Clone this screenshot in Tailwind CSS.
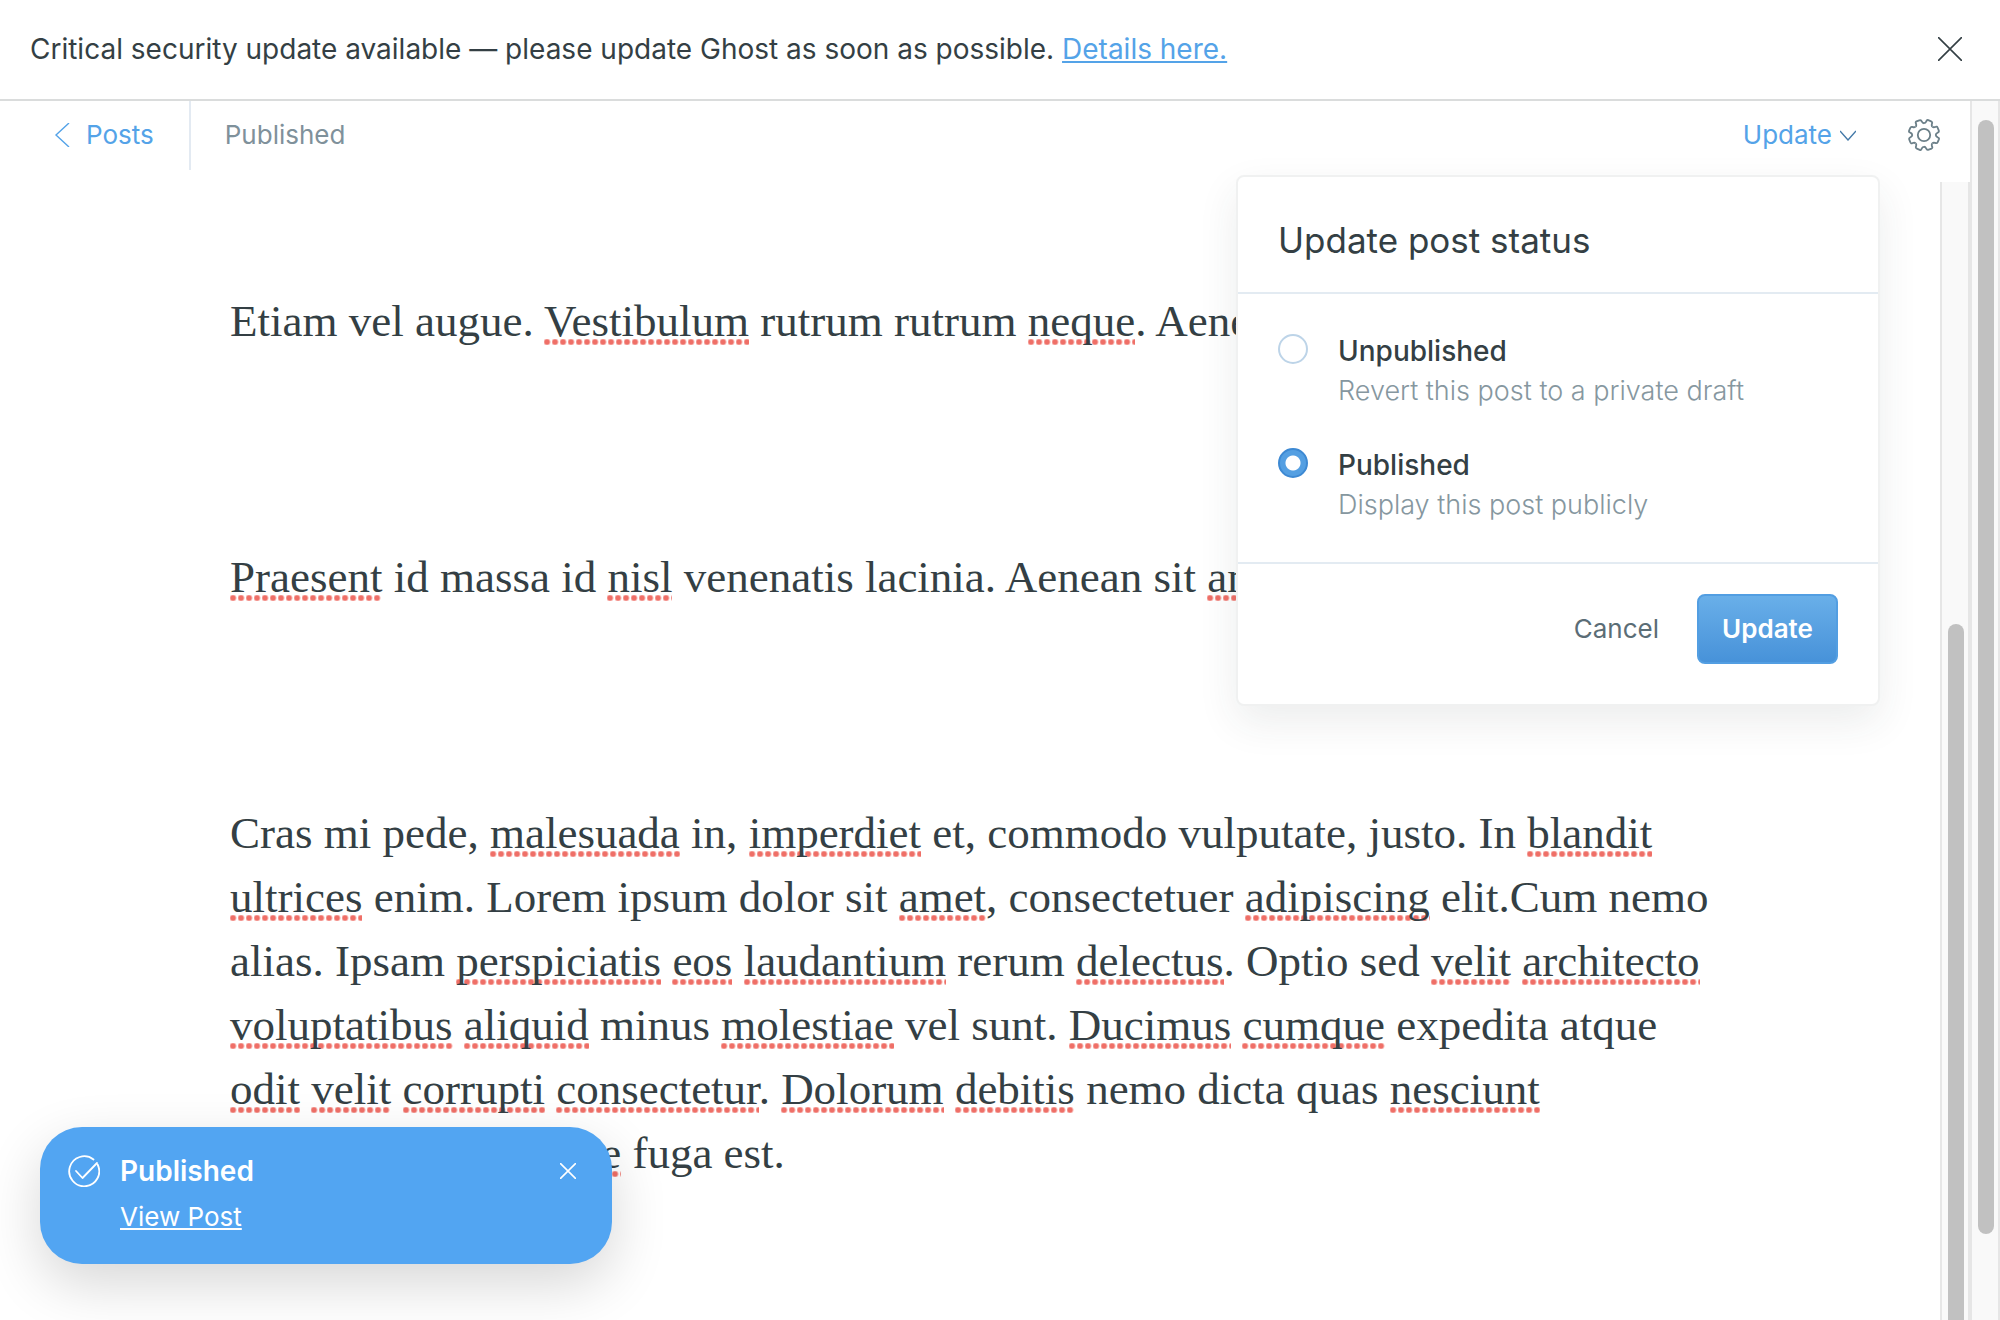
<!DOCTYPE html>
<html lang="en">
<head>
<meta charset="utf-8">
<meta name="viewport" content="width=device-width, initial-scale=1">
<title>Edit post</title>
<script src="https://cdn.jsdelivr.net/npm/@tailwindcss/browser@4"></script>
</head>
<body class="relative flex h-screen flex-col overflow-hidden bg-white font-['Inter',sans-serif] text-[28px] leading-10 text-[#343f44]">

  <!-- Alert banner -->
  <aside class="flex shrink-0 items-center justify-between border-b-2 border-[#dadcdc] pt-[29px] pr-[38px] pb-[30px] pl-[30px]">
    <p class="whitespace-nowrap">Critical security update available — please update Ghost as soon as possible. <a href="#" class="text-[#54a3e8] underline decoration-2 underline-offset-2">Details here.</a></p>
    <button type="button" aria-label="Dismiss" class="text-[#343f44]">
      <svg class="size-6" viewBox="0 0 24 24" fill="none" stroke="currentColor" stroke-width="1.6"><path d="M0 0 24 24M24 0 0 24"/></svg>
    </button>
  </aside>

  <div class="flex min-h-0 flex-1">
    <div class="relative flex min-w-0 flex-1 flex-col">

      <!-- Editor toolbar -->
      <header class="flex h-[81px] shrink-0 items-start justify-between pr-[30px] text-[26px]">
        <nav class="flex">
          <a href="#" class="flex h-[69px] items-center gap-4 border-r-2 border-[#e3eaf2] pr-[35px] pb-0.5 pl-[54px] text-[#54a3e8]">
            <svg class="h-6 w-4" viewBox="0 0 16 24" fill="none" stroke="currentColor" stroke-width="1.4"><path d="M15 0 2 12 15 24"/></svg>
            Posts
          </a>
          <span class="flex h-[69px] items-center pb-0.5 pl-[34px] text-[#7f919b]">Published</span>
        </nav>
        <div class="flex h-[69px] items-center gap-[52px] pb-0.5">
          <button type="button" class="flex items-center gap-2 text-[#54a3e8]">
            Update
            <svg class="h-3 w-4" viewBox="0 0 16 12" fill="none" stroke="#4379a8" stroke-width="1.4"><path d="M0 2 8 11 16 2"/></svg>
          </button>
          <button type="button" aria-label="Settings" class="text-[#6b7f88]">
            <svg class="size-8" viewBox="-16 -16 32 32" fill="none" stroke="currentColor" stroke-width="1.8">
              <circle r="6.200"/>
              <path id="tooth" d="M0-11.800C1.600-11.800 2-13 2.500-14Q3-15.400 4.300-14.900L7.100-13.700Q8.500-13.100 8.100-11.700C7.800-10.600 7.200-9.500 8.300-8.300"/>
              <use href="#tooth" transform="rotate(45)"/><use href="#tooth" transform="rotate(90)"/><use href="#tooth" transform="rotate(135)"/><use href="#tooth" transform="rotate(180)"/><use href="#tooth" transform="rotate(225)"/><use href="#tooth" transform="rotate(270)"/><use href="#tooth" transform="rotate(315)"/>
            </svg>
          </button>
        </div>
      </header>

      <!-- Post body and its scrollbar -->
      <div class="flex min-h-0 flex-1">
        <main class="min-w-0 flex-1 overflow-hidden">
          <article class="mx-auto flex max-w-[1480px] flex-col gap-48 pt-[107px] font-['Liberation_Serif',serif] text-[45px] leading-[64px] whitespace-nowrap [&_u]:bg-[radial-gradient(circle_at_3px_3px,#ef6f67_2px,transparent_4px)] [&_u]:bg-[length:8px_6px] [&_u]:bg-[position:0_43px] [&_u]:bg-repeat-x [&_u]:no-underline">
            <p>Etiam vel augue. <u>Vestibulum</u> rutrum rutrum <u>neque</u>. Aenean</p>
            <p><u>Praesent</u> id massa id <u>nisl</u> venenatis lacinia. Aenean sit <u>amet</u></p>
            <p>Cras mi pede, <u>malesuada</u> in, <u>imperdiet</u> et, commodo vulputate, justo. In <u>blandit</u><br>
              <u>ultrices</u> enim. Lorem ipsum dolor sit <u>amet</u>, consectetuer <u>adipiscing</u> elit.Cum nemo<br>
              alias. Ipsam <u>perspiciatis</u> <u>eos</u> <u>laudantium</u> rerum <u>delectus</u>. Optio sed <u>velit</u> <u>architecto</u><br>
              <u>voluptatibus</u> <u>aliquid</u> minus <u>molestiae</u> vel sunt. <u>Ducimus</u> <u>cumque</u> expedita atque<br>
              <u>odit</u> <u>velit</u> <u>corrupti</u> <u>consectetur</u>. <u>Dolorum</u> <u>debitis</u> nemo dicta quas <u>nesciunt</u><br>
              <u>voluptatem</u> <u>cupiditate</u> fuga est.</p>
          </article>
        </main>
        <div class="flex w-[30px] justify-end border-x-2 border-[#e6e6e6] bg-[#f9f9f9] pt-[442px] pr-1">
          <div class="w-4 rounded-t-full bg-[#c1c1c1]"></div>
        </div>
      </div>

      <!-- Publish menu -->
      <form class="absolute top-[74px] right-[90px] w-[644px] rounded-lg border-2 border-[#f0f1f1] bg-white shadow-[0_16px_40px_rgba(40,60,60,0.09)]">
        <h2 class="border-b-2 border-[#e3ebf2] px-10 pt-[42px] pb-[30px] text-[35px] leading-[43px]">Update post status</h2>
        <div class="flex flex-col gap-[34px] px-10 py-[37px]">
          <div class="flex items-start gap-[30px]">
            <input type="radio" id="unpublished" name="status" class="mt-[3px] size-[30px] shrink-0 appearance-none rounded-full border-2 border-[#bdd4e8] bg-white">
            <label for="unpublished" class="flex flex-col leading-10">
              <span class="font-medium">Unpublished</span>
              <span class="text-[27px] font-light text-[#86979f]">Revert this post to a private draft</span>
            </label>
          </div>
          <div class="flex items-start gap-[30px]">
            <input type="radio" id="published" name="status" checked class="mt-[3px] size-[30px] shrink-0 appearance-none rounded-full border-2 border-[#3d89d3] bg-[radial-gradient(circle,#fff_7px,#549fe2_8px)]">
            <label for="published" class="flex flex-col leading-10">
              <span class="font-medium">Published</span>
              <span class="text-[27px] font-light text-[#86979f]">Display this post publicly</span>
            </label>
          </div>
        </div>
        <div class="flex items-center justify-end gap-[38px] border-t-2 border-[#e3ebf2] px-10 pt-[30px] pb-10 text-[26px]">
          <button type="button" class="text-[#5b6d76]">Cancel</button>
          <button type="submit" class="h-[70px] w-[141px] rounded-lg border-2 border-[#529ee2] bg-linear-to-b from-[#69afe9] to-[#4792d9] font-semibold text-white">Update</button>
        </div>
      </form>
    </div>

    <!-- Window scrollbar -->
    <div class="flex w-[30px] shrink-0 justify-end border-x-2 border-[#e6e6e6] bg-[#f9f9f9] pt-[19px] pr-1 pb-[86px]">
      <div class="w-4 rounded-full bg-[#c1c1c1]"></div>
    </div>
  </div>

  <!-- Toast -->
  <div role="status" class="absolute bottom-14 left-10 flex h-[137px] w-[572px] items-start gap-5 rounded-[42px] bg-[#52a5f2] pt-6 pr-9 pl-7 text-white shadow-[0_20px_56px_rgba(0,0,0,0.16)]">
    <svg class="mt-1 size-8 shrink-0" viewBox="0 0 32 32" fill="none" stroke="currentColor" stroke-width="1.8" stroke-linecap="round" stroke-linejoin="round"><path d="M25.500 4.500A15 15 0 1 0 29.600 9.500"/><path d="M8 16 14.500 23 29 8"/></svg>
    <div class="flex flex-1 flex-col gap-1.5">
      <span class="font-semibold">Published</span>
      <a href="#" class="self-start text-[26px] underline decoration-2 underline-offset-2">View Post</a>
    </div>
    <button type="button" aria-label="Close" class="mt-3">
      <svg class="size-4" viewBox="0 0 16 16" fill="none" stroke="currentColor" stroke-width="1.6"><path d="M0 0 16 16M16 0 0 16"/></svg>
    </button>
  </div>
</body>
</html>
